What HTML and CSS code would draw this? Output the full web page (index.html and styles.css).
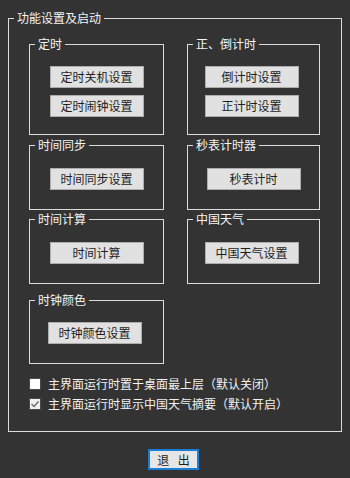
FILE: index.html
```html
<!DOCTYPE html>
<html lang="zh-CN">
<head>
    <meta charset="utf-8">
    <link rel="stylesheet" href="styles.css">
</head>
<body>
    <div class="group outer">
        <div class="group-title">功能设置及启动</div>
        <div class="grid">
            <div class="group box box-first">
                <div class="group-title">定时</div>
                <button class="btn">定时关机设置</button>
                <button class="btn btn-next">定时闹钟设置</button>
            </div>
            <div class="group box box-first box-shift">
                <div class="group-title">正、倒计时</div>
                <button class="btn">倒计时设置</button>
                <button class="btn btn-next">正计时设置</button>
            </div>
            <div class="group box box-small">
                <div class="group-title">时间同步</div>
                <button class="btn btn-low">时间同步设置</button>
            </div>
            <div class="group box box-small">
                <div class="group-title">秒表计时器</div>
                <button class="btn btn-low">秒表计时</button>
            </div>
            <div class="group box box-small">
                <div class="group-title">时间计算</div>
                <button class="btn btn-low">时间计算</button>
            </div>
            <div class="group box box-small box-shift">
                <div class="group-title">中国天气</div>
                <button class="btn btn-low">中国天气设置</button>
            </div>
            <div class="group box box-last box-shift">
                <div class="group-title">时钟颜色</div>
                <button class="btn">时钟颜色设置</button>
            </div>
        </div>
        <div class="checks">
            <label class="check">
                <span class="check-box"></span>
                <span>主界面运行时置于桌面最上层（默认关闭）</span>
            </label>
            <label class="check">
                <span class="check-box checked">
                    <svg width="10" height="10" viewBox="0 0 10 10"><polyline points="1.5,5 4,7.5 8.5,2.5" fill="none" stroke="#6a6a6a" stroke-width="1.4"/></svg>
                </span>
                <span>主界面运行时显示中国天气摘要（默认开启）</span>
            </label>
        </div>
    </div>
    <button class="exit-btn">退 出</button>
</body>
</html>
```

FILE: styles.css
```css
body {
    margin: 0;
    padding: 18px 8px 0 8px;
    background-color: #333333;
    color: #f2f2f2;
    font-family: "Noto Sans CJK SC", "Noto Sans", sans-serif;
    font-size: 12px;
    line-height: 16px;
}
.group {
    border: 1px solid #dcdcdc;
    box-sizing: border-box;
}
.group-title {
    width: fit-content;
    margin-top: -9px;
    margin-left: 5px;
    padding: 0 3px;
    background-color: #333333;
    color: #f5f5f5;
}
.outer {
    width: 334px;
    padding: 0 0 17px 0;
}
.grid {
    display: grid;
    grid-template-columns: 135px 133px;
    column-gap: 23px;
    row-gap: 9px;
    align-items: start;
    margin: 18px 0 0 20px;
}
.box {
    display: flex;
    flex-direction: column;
    align-items: center;
}
.box .group-title {
    align-self: flex-start;
}
.box-shift {
    padding-right: 4px;
}
.box-first {
    height: 91px;
    margin-bottom: 1px;
}
.box-small {
    height: 65px;
}
.box-last {
    height: 64px;
    margin-top: 7px;
}
.btn {
    width: 94px;
    height: 22px;
    margin-top: 14px;
    padding: 0;
    border: 1px solid #adadad;
    background-color: #e1e1e1;
    color: #1e1e1e;
    font-family: inherit;
    font-size: 12px;
    line-height: 18px;
}
.btn-next {
    margin-top: 7px;
}
.btn-low {
    margin-top: 15px;
}
.checks {
    margin: 10px 0 0 20px;
}
.check {
    display: flex;
    align-items: center;
    height: 20px;
}
.check-box {
    display: flex;
    align-items: center;
    justify-content: center;
    width: 12px;
    height: 12px;
    box-sizing: border-box;
    border: 1px solid #4a4a4a;
    background-color: #ffffff;
    margin-right: 7px;
}
.check-box.checked {
    background-color: #f0f0f0;
}
.exit-btn {
    display: block;
    width: 51px;
    height: 21px;
    margin: 17px 0 0 140px;
    padding: 0;
    border: 2px solid #1a7fd4;
    background-color: #e6e6e6;
    color: #1e1e1e;
    font-family: inherit;
    font-size: 12px;
    line-height: 16px;
    word-spacing: 6px;
}
```
